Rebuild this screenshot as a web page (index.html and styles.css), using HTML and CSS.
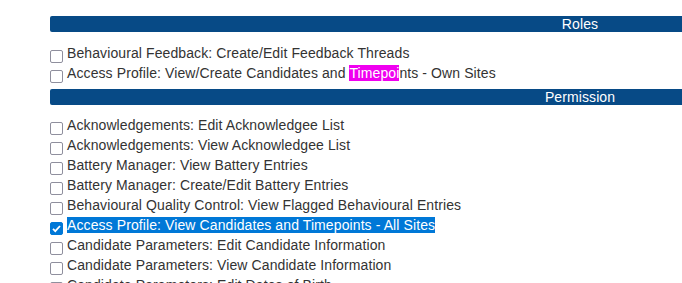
FILE: index.html
```html
<!DOCTYPE html>
<html lang="en">
<head>
  <meta charset="UTF-8" />
  <title>Permissions</title>
  <link rel="stylesheet" href="styles.css">
</head>
<body>
  <div class="perm-table">
    <div class="section-head">Roles</div>
    <div class="section-body">
      <label class="perm-row"><input type="checkbox"><span>Behavioural Feedback: Create/Edit Feedback Threads</span></label>
      <label class="perm-row"><input type="checkbox"><span>Access Profile: View/Create Candidates and <mark class="found">Timepoi</mark>nts - Own Sites</span></label>
    </div>

    <div class="section-head">Permission</div>
    <div class="section-body">
      <label class="perm-row"><input type="checkbox"><span>Acknowledgements: Edit Acknowledgee List</span></label>
      <label class="perm-row"><input type="checkbox"><span>Acknowledgements: View Acknowledgee List</span></label>
      <label class="perm-row"><input type="checkbox"><span>Battery Manager: View Battery Entries</span></label>
      <label class="perm-row"><input type="checkbox"><span>Battery Manager: Create/Edit Battery Entries</span></label>
      <label class="perm-row"><input type="checkbox"><span>Behavioural Quality Control: View Flagged Behavioural Entries</span></label>
      <label class="perm-row"><input type="checkbox" checked><span class="selected">Access Profile: View Candidates and Timepoints - All Sites</span></label>
      <label class="perm-row"><input type="checkbox"><span>Candidate Parameters: Edit Candidate Information</span></label>
      <label class="perm-row"><input type="checkbox"><span>Candidate Parameters: View Candidate Information</span></label>
      <label class="perm-row"><input type="checkbox"><span>Candidate Parameters: Edit Dates of Birth</span></label>
    </div>
  </div>
</body>
</html>
```

FILE: styles.css
```css
html {
  overflow: hidden;
}
body {
  margin: 0;
  padding: 16px 0 0 50px;
  font-family: 'Liberation Sans', Arial, sans-serif;
  font-size: 14px;
  letter-spacing: 0.1px;
  color: #333;
  background: #fff;
}
.perm-table {
  width: 1060px;
}
.section-head {
  background-color: #074a86;
  color: white;
  text-align: center;
  height: 16px;
  line-height: 16px;
  border-radius: 2px;
}
.section-body {
  padding: 11px 0 6px;
}
.section-body + .section-head + .section-body {
  padding-top: 10px;
}
.perm-row {
  display: flex;
  align-items: flex-start;
  gap: 4px;
  height: 20px;
  line-height: 20px;
}
.perm-row input {
  appearance: none;
  -webkit-appearance: none;
  width: 13px;
  height: 13px;
  margin: 7px 0 0 0;
  border: 1px solid #8f8f9d;
  border-radius: 2px;
  background: #fff;
  flex-shrink: 0;
}
.perm-row input:checked {
  border-color: #0078d7;
  background: #0078d7 url("data:image/svg+xml,%3Csvg xmlns='http://www.w3.org/2000/svg' viewBox='0 0 13 13'%3E%3Cpath d='M3 6.8l2.3 2.3L10 4' fill='none' stroke='white' stroke-width='1.8'/%3E%3C/svg%3E") center/13px no-repeat;
}
.selected {
  background: #0078d7;
  color: #fff;
  line-height: normal;
  align-self: center;
}
.found {
  background: #f000f0;
  color: #fff;
}
```
